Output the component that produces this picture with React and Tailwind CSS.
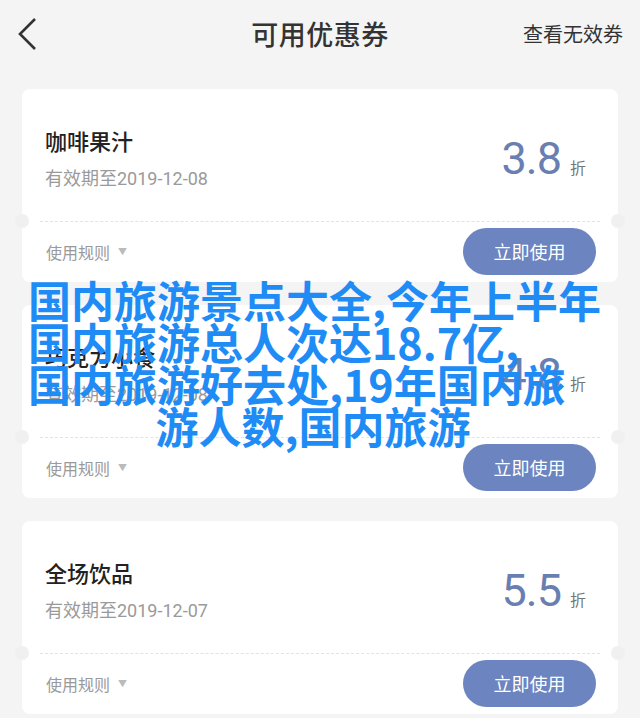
import React from "react";

const coupons = [
  { name: "咖啡果汁", date: "2019-12-08", rate: "3.8" },
  { name: "巧克力小食", date: "2019-12-08", rate: "4.8" },
  { name: "全场饮品", date: "2019-12-07", rate: "5.5" },
];

const CouponCard = ({ coupon }) => {
  return (
    <div className="relative bg-white rounded-[8px] h-[193px] flex flex-col">
      <div className="flex justify-between px-[23px] pt-[36px] h-[132px]">
        <div>
          <div className="text-[22px] leading-[30px] font-medium text-[#222]">{coupon.name}</div>
          <div className="mt-[12px] text-[18px] leading-[24px] text-[#9a9a9a] font-['Roboto','Noto_Sans_CJK_SC',sans-serif]">
            有效期至{coupon.date}
          </div>
        </div>
        <div className="flex items-baseline pr-[9px] mt-[11px] h-[44px]">
          <span className="text-[45px] leading-none text-[#6a7fb1] tracking-[-1px] font-['Roboto',sans-serif]">{coupon.rate}</span>
          <span className="ml-[9px] text-[16px] leading-none text-[#777]">折</span>
        </div>
      </div>

      <div className="mx-[18px] border-t border-dashed border-[#e3e3e3]" />
      <span className="absolute left-[-7px] top-[125px] w-[14px] h-[14px] rounded-full bg-[#f0f0f0]" />
      <span className="absolute right-[-7px] top-[125px] w-[14px] h-[14px] rounded-full bg-[#f0f0f0]" />

      <div className="flex items-center justify-between pl-[24px] pr-[22px] pt-[6px]">
        <div className="flex items-center text-[16px] text-[#9a9a9a]">
          使用规则
          <span className="ml-[8px] text-[9px] text-[#bbbbbb]">▼</span>
        </div>
        <button className="w-[133px] h-[47px] rounded-full bg-[#6c84c0] text-white text-[18px]">
          立即使用
        </button>
      </div>
    </div>
  );
};

const App = () => {
  return (
    <div className="relative min-h-[718px] bg-[#f4f4f4] font-['Noto_Sans_CJK_SC',sans-serif] overflow-hidden">
      <div className="grid grid-cols-[1fr_auto_1fr] items-center h-[68px] px-[17px]">
        <div>
          <svg width="20" height="34" viewBox="0 0 20 34" className="ml-[1px]">
            <polyline points="17,2 2,17 17,32" fill="none" stroke="#333" strokeWidth="2.6" strokeLinejoin="miter" />
          </svg>
        </div>
        <div className="text-[27px] font-medium text-[#333] tracking-[0.5px]">可用优惠券</div>
        <div className="text-right text-[20px] text-[#333]">查看无效券</div>
      </div>

      <div className="flex flex-col gap-[23px] px-[22px] pt-[21px]">
        {coupons.map((c) => (
          <CouponCard key={c.name} coupon={c} />
        ))}
      </div>

      <div className="absolute top-[278px] left-[28px] w-[570px] text-[43px] leading-[42px] font-bold text-[#1f8cf6] whitespace-nowrap">
        <div>国内旅游景点大全,今年上半年</div>
        <div>国内旅游总人次达18.7亿,</div>
        <div>国内旅游好去处,19年国内旅</div>
        <div className="text-center">游人数,国内旅游</div>
      </div>
    </div>
  );
};

export default App;
